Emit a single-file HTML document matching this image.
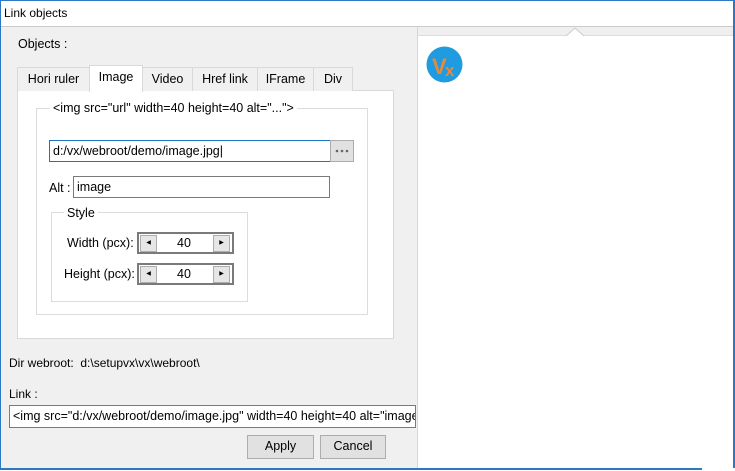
<!DOCTYPE html>
<html><head><style>
*{box-sizing:border-box;margin:0;padding:0}
body{width:735px;height:471px;background:#fff;font-family:"Liberation Sans",sans-serif;font-size:12px;color:#000;position:relative;overflow:hidden}
.a{position:absolute}
.t{position:absolute;white-space:nowrap;line-height:14px}
.inp{position:absolute;background:#fff;border:1px solid #7a7a7a;padding:3px 3px;line-height:14px;white-space:nowrap;overflow:hidden}
.tab{position:absolute;top:67px;height:24px;border:1px solid #d9d9d9;border-bottom:none;background:#f0f0f0;text-align:center;line-height:22px;font-size:12.5px}
.btn{position:absolute;background:#e1e1e1;border:1px solid #adadad;text-align:center;line-height:21px}
.sb{position:absolute;width:17px;height:17px;top:1px;background:#e6e6e6;border:1px solid #adadad;font-size:6px;line-height:15px;text-align:center}
</style></head><body>
<div class="a" style="left:0;top:0;width:735px;height:1px;background:#2b79c2"></div>
<div class="a" style="left:0;top:0;width:1px;height:470px;background:#2b79c2"></div>
<div class="a" style="left:733px;top:0;width:2px;height:468px;background:#2b79c2"></div>
<div class="a" style="left:0;top:468px;width:702px;height:2px;background:#2b79c2"></div>
<div class="t" style="left:4px;top:6px;font-size:12px">Link objects</div>
<div class="a" style="left:1px;top:26px;width:732px;height:1px;background:#ccc"></div>
<div class="a" style="left:1px;top:27px;width:416px;height:441px;background:#f0f0f0"></div>
<div class="a" style="left:417px;top:27px;width:1px;height:441px;background:#d6d6d6"></div>
<div class="a" style="left:418px;top:27px;width:315px;height:9px;background:#efefef;border-bottom:1px solid #ddd"></div>
<svg class="a" style="left:564px;top:27px" width="22" height="10"><path d="M2 9 L11 1 L20 9" fill="#fff" stroke="#ccc"/></svg>
<svg class="a" style="left:426px;top:46px" width="37" height="37"><circle cx="18.5" cy="18.5" r="18" fill="#1f9be0"/><text x="6" y="28" font-family="Liberation Sans" font-weight="bold" font-size="22" fill="#e8883a">V</text><text x="19" y="30" font-family="Liberation Sans" font-weight="bold" font-size="17" fill="#e8883a">x</text></svg>
<div class="t" style="left:18px;top:37px;font-size:12.5px">Objects :</div>
<div class="a" style="left:17px;top:90px;width:377px;height:249px;background:#fff;border:1px solid #d9d9d9"></div>
<div class="tab" style="left:17px;width:73px">Hori ruler</div>
<div class="tab" style="left:89px;top:65px;height:27px;width:54px;background:#fff;z-index:2">Image</div>
<div class="tab" style="left:142px;width:51px">Video</div>
<div class="tab" style="left:192px;width:66px">Href link</div>
<div class="tab" style="left:257px;width:57px">IFrame</div>
<div class="tab" style="left:313px;width:40px">Div</div>
<div class="a" style="left:36px;top:108px;width:332px;height:207px;border:1px solid #dcdcdc"></div>
<div class="t" style="left:50px;top:101px;background:#fff;padding:0 3px;font-size:12.5px">&lt;img src="url" width=40 height=40 alt="..."&gt;</div>
<div class="inp" style="left:49px;top:140px;width:282px;height:22px;border-color:#1e73be;font-size:12.5px">d:/vx/webroot/demo/image.jpg|</div>
<div class="a" style="left:330px;top:140px;width:24px;height:22px;background:#e1e1e1;border:1px solid #adadad"><svg width="22" height="20"><circle cx="6" cy="10" r="1.3" fill="#666"/><circle cx="11" cy="10" r="1.3" fill="#666"/><circle cx="16" cy="10" r="1.3" fill="#666"/></svg></div>
<div class="t" style="left:49px;top:181px;font-size:12.5px">Alt :</div>
<div class="inp" style="left:73px;top:176px;width:257px;height:22px;font-size:12.5px">image</div>
<div class="a" style="left:51px;top:212px;width:197px;height:90px;border:1px solid #dcdcdc"></div>
<div class="t" style="left:64px;top:206px;background:#fff;padding:0 3px;font-size:12.5px">Style</div>
<div class="t" style="left:67px;top:236px;font-size:12.5px">Width (pcx):</div>
<div class="t" style="left:64px;top:267px;font-size:12.5px">Height (pcx):</div>
<div class="a" style="left:137px;top:232px;width:97px;height:22px;border:2px solid #7a7a7a;background:#fff"><div class="sb" style="left:1px">◀</div><div class="t" style="left:38px;top:2px;font-size:12.5px">40</div><div class="sb" style="left:74px">▶</div></div>
<div class="a" style="left:137px;top:263px;width:97px;height:22px;border:2px solid #7a7a7a;background:#fff"><div class="sb" style="left:1px">◀</div><div class="t" style="left:38px;top:2px;font-size:12.5px">40</div><div class="sb" style="left:74px">▶</div></div>
<div class="t" style="left:9px;top:356px;font-size:12px">Dir webroot:&nbsp; d:\setupvx\vx\webroot\</div>
<div class="t" style="left:9px;top:387px;font-size:12px">Link :</div>
<div class="inp" style="left:9px;top:405px;width:407px;height:23px;font-size:12.5px">&lt;img src="d:/vx/webroot/demo/image.jpg" width=40 height=40 alt="image"&gt;</div>
<div class="btn" style="left:247px;top:435px;width:67px;height:24px;font-size:12.5px">Apply</div>
<div class="btn" style="left:320px;top:435px;width:66px;height:24px;font-size:12.5px">Cancel</div>
</body></html>
